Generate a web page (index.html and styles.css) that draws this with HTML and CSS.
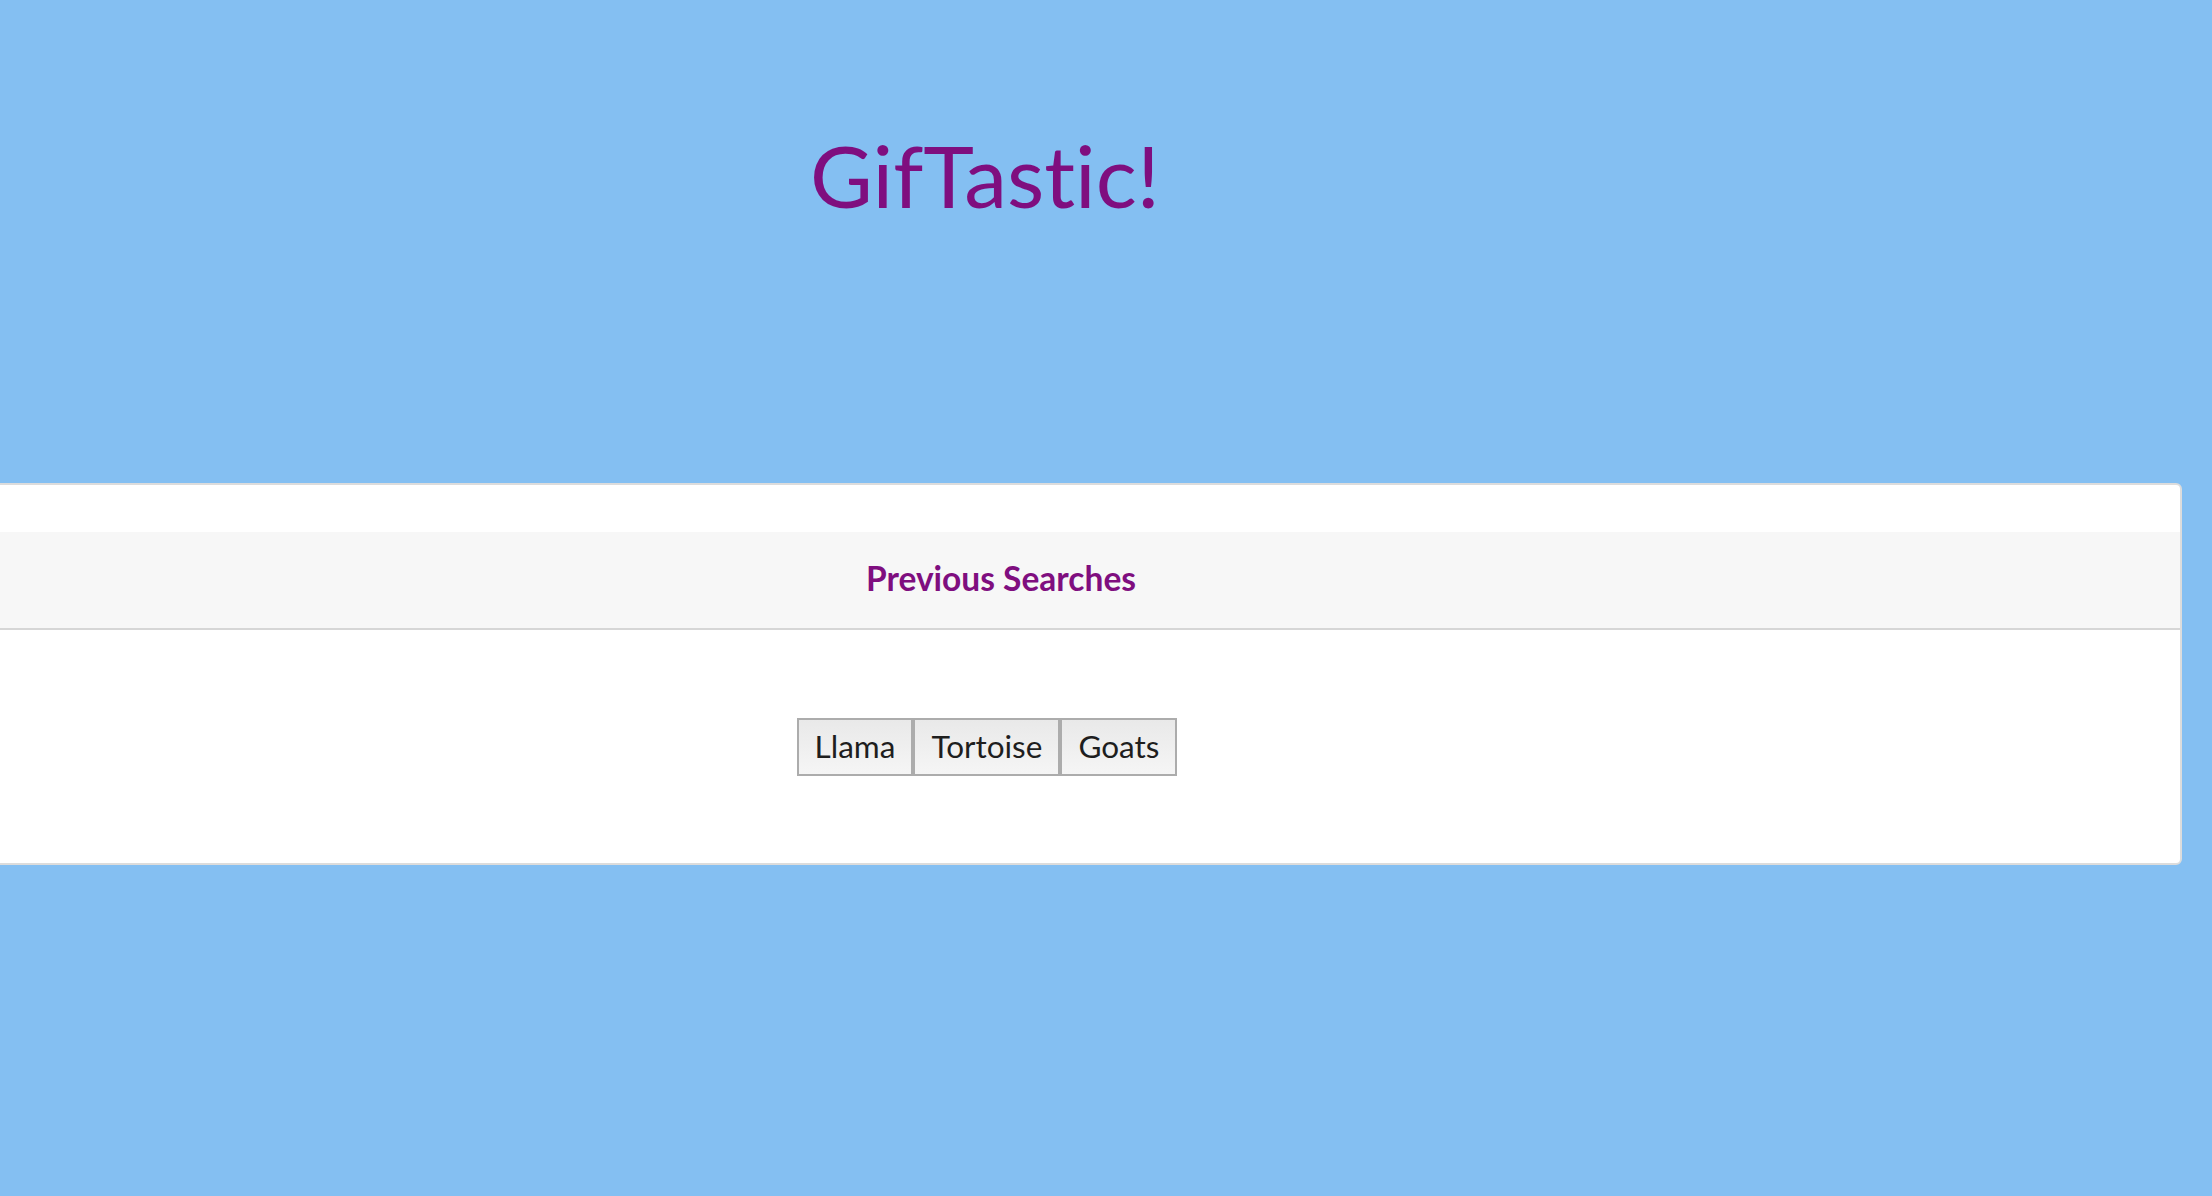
FILE: index.html
```html
<!DOCTYPE html>
<html>
<head>
<meta charset="utf-8">
<title>GifTastic!</title>
<link rel="stylesheet" href="styles.css">
</head>
<body>
<div class="page">
  <header class="masthead">
    <h1 class="title">GifTastic!</h1>
  </header>
  <section class="card">
    <div class="card-top"></div>
    <div class="card-header">
      <h2 class="card-title">Previous Searches</h2>
    </div>
    <div class="card-body">
      <div class="btn-row"><button class="search-btn">Llama</button><button class="search-btn">Tortoise</button><button class="search-btn">Goats</button></div>
    </div>
  </section>
</div>
</body>
</html>
```

FILE: styles.css
```css
html, body {
  margin: 0;
  padding: 0;
}
body {
  background: #84bff2;
  font-family: Lato, "Noto Sans", sans-serif;
  font-variant-ligatures: none;
  overflow: hidden;
  height: 1196px;
}
.page {
  width: 2364px;
  margin-left: -182px;
}
.masthead {
  height: 483px;
  box-sizing: border-box;
  padding-top: 125px;
  padding-right: 30px;
  text-align: center;
}
.title {
  margin: 0;
  font-size: 86px;
  font-weight: 400;
  line-height: 100px;
  color: #7f0e7f;
  font-variant-ligatures: none;
}
.card {
  background: #fff;
  border: 2px solid #dcdcdc;
  border-radius: 6px;
}
.card-top {
  height: 47px;
}
.card-header {
  background: #f7f7f7;
  border-bottom: 2px solid #d6d6d6;
  height: 98px;
  box-sizing: border-box;
  padding-bottom: 4px;
  display: flex;
  align-items: center;
  justify-content: center;
}
.card-title {
  margin: 0;
  font-size: 33.5px;
  font-weight: 700;
  color: #7f0e7f;
  padding-left: 2px;
}
.card-body {
  height: 233px;
  box-sizing: border-box;
  padding-top: 88px;
  padding-right: 26px;
  text-align: center;
}
.btn-row {
  display: inline-flex;
}
.search-btn {
  font-family: Lato, "Noto Sans", sans-serif;
  font-size: 31.5px;
  color: #1e1e1e;
  height: 58px;
  padding: 0 16px 2px;
  margin: 0;
  border: 2px solid #acacac;
  background: linear-gradient(#e9e9e9, #f5f5f5);
  border-radius: 0;
}
```
